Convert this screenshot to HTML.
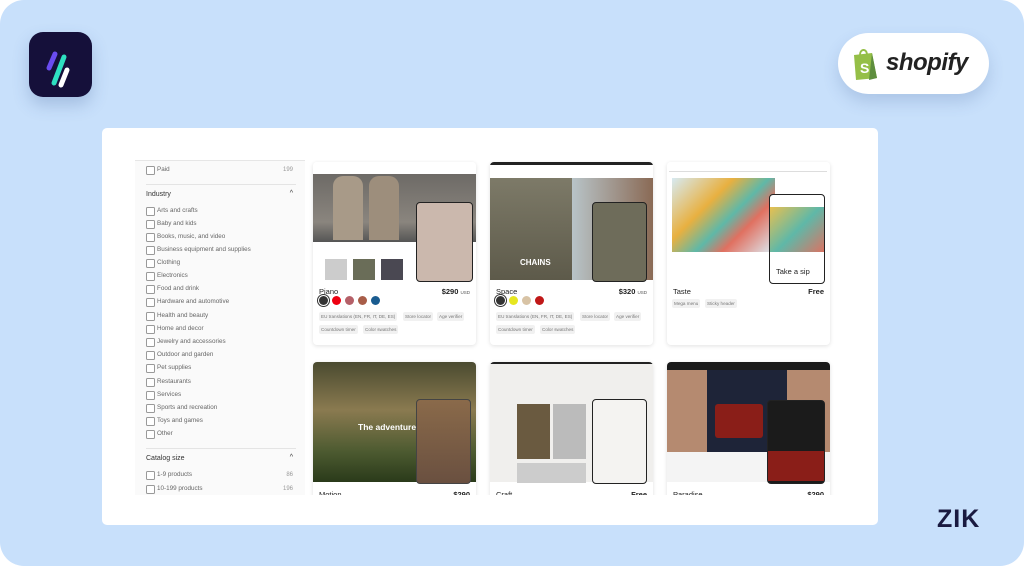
<!DOCTYPE html>
<html><head><meta charset="utf-8"><style>
*{margin:0;padding:0;box-sizing:border-box}
body{width:1024px;height:566px;background:#fff;font-family:"Liberation Sans",sans-serif;overflow:hidden;position:relative}
.bg{position:absolute;left:0;top:0;width:1024px;height:566px;background:#c8e0fb;border-radius:24px}
.logo{position:absolute;left:29px;top:32px;width:63px;height:65px;background:#15103a;border-radius:14px;box-shadow:0 8px 16px rgba(60,90,150,.25)}
.shop{position:absolute;left:838px;top:33px;width:151px;height:61px;background:#fff;border-radius:31px;box-shadow:0 8px 16px rgba(60,90,150,.2)}
.shop span{position:absolute;left:48px;top:16px;font-size:24px;font-weight:bold;font-style:italic;color:#222;letter-spacing:-.5px}
.panel{position:absolute;left:102px;top:128px;width:776px;height:397px;background:#fff;border-radius:5px}
.zik{position:absolute;left:937px;top:505px;font-size:25px;font-weight:bold;color:#1a1a40;letter-spacing:1px}
.clip{position:absolute;left:135px;top:160px;width:712px;height:335px;overflow:hidden;background:#fff}
.side{position:absolute;left:0;top:0;width:170px;height:335px;background:#fafafa;border-top:1px solid #e6e6e6}
.row{position:absolute;left:11px;font-size:6.3px;color:#666;height:9px;line-height:8px}
.row:before{content:"";position:absolute;left:0;top:0;width:7px;height:7px;border:1px solid #999;border-radius:1.5px;background:#fff}
.row span{margin-left:11px}
.cnt{position:absolute;right:12px;font-size:6px;color:#999}
.hd{position:absolute;left:11px;font-size:7px;color:#333}
.car{position:absolute;right:12px;font-size:7px;color:#333}
.sep{position:absolute;left:11px;width:150px;height:1px;background:#e4e4e4}
.card{position:absolute;width:163px;height:183px;background:#fff;border-radius:4px;box-shadow:0 1px 4px rgba(0,0,0,.12);overflow:hidden}
.img{position:absolute;left:0;top:0;width:163px;height:118px}
.nm{position:absolute;left:6px;top:125px;font-size:7.5px;color:#222}
.pr{position:absolute;right:6px;top:125px;font-size:7.5px;color:#222;font-weight:bold}
.pr small{font-size:4.5px;font-weight:normal;color:#555}
.sw{position:absolute;top:134px;width:9px;height:9px;border-radius:50%}
.tag{position:absolute;font-size:4.6px;color:#777;background:#f1f1f1;padding:2px 2px;border-radius:2px;white-space:nowrap}
.ph{position:absolute;background:#fff;border:1.5px solid #222;border-radius:4px;overflow:hidden}
</style></head><body>
<div class="bg"></div>
<div class="logo"><svg width="63" height="65" viewBox="0 0 63 65"><line x1="20" y1="36" x2="26" y2="22" stroke="#6a4cf0" stroke-width="5" stroke-linecap="round"/><line x1="25" y1="51" x2="35" y2="25" stroke="#2ee0c0" stroke-width="5" stroke-linecap="round"/><line x1="32" y1="53" x2="38" y2="38" stroke="#fff" stroke-width="5" stroke-linecap="round"/></svg></div>
<div class="shop"><svg style="position:absolute;left:12px;top:14px" width="30" height="34" viewBox="0 0 30 34"><path d="M4 8 L22 6 L27 31 L6 33 Z" fill="#95bf47"/><path d="M22 6 L27 31 L19 33 Z" fill="#5e8e3e"/><path d="M10 8 C10 2 16 1 17 7" fill="none" stroke="#95bf47" stroke-width="2"/><text x="10" y="26" font-size="14" font-weight="bold" fill="#fff" font-family="Liberation Sans">S</text></svg><span>shopify</span></div>
<div class="panel"></div>
<div class="clip">
<div class="side">
<div class="row" style="top:5px"><span>Paid</span></div><div class="cnt" style="top:6px">199</div>
<div class="sep" style="top:23px"></div>
<div class="hd" style="top:30px">Industry</div><div class="car" style="top:29px">^</div>
<div class="row" style="top:46px"><span>Arts and crafts</span></div>
<div class="row" style="top:59px"><span>Baby and kids</span></div>
<div class="row" style="top:72px"><span>Books, music, and video</span></div>
<div class="row" style="top:85px"><span>Business equipment and supplies</span></div>
<div class="row" style="top:98px"><span>Clothing</span></div>
<div class="row" style="top:111px"><span>Electronics</span></div>
<div class="row" style="top:124px"><span>Food and drink</span></div>
<div class="row" style="top:137px"><span>Hardware and automotive</span></div>
<div class="row" style="top:151px"><span>Health and beauty</span></div>
<div class="row" style="top:164px"><span>Home and decor</span></div>
<div class="row" style="top:177px"><span>Jewelry and accessories</span></div>
<div class="row" style="top:190px"><span>Outdoor and garden</span></div>
<div class="row" style="top:203px"><span>Pet supplies</span></div>
<div class="row" style="top:217px"><span>Restaurants</span></div>
<div class="row" style="top:230px"><span>Services</span></div>
<div class="row" style="top:243px"><span>Sports and recreation</span></div>
<div class="row" style="top:256px"><span>Toys and games</span></div>
<div class="row" style="top:269px"><span>Other</span></div>
<div class="sep" style="top:287px"></div>
<div class="hd" style="top:294px">Catalog size</div><div class="car" style="top:293px">^</div>
<div class="row" style="top:310px"><span>1-9 products</span></div><div class="cnt" style="top:311px">86</div>
<div class="row" style="top:324px"><span>10-199 products</span></div><div class="cnt" style="top:325px">196</div>
</div>

<div class="card" style="left:178px;top:2px">
<div class="img" style="background:linear-gradient(#fff 0,#fff 12px,#6d6a66 12px,#8a857e 60px,#555 80px,#fff 80px)"></div>
<div style="position:absolute;left:20px;top:14px;width:30px;height:64px;background:#a89a88;border-radius:10px 10px 0 0"></div>
<div style="position:absolute;left:56px;top:14px;width:30px;height:64px;background:#9d8e7c;border-radius:10px 10px 0 0"></div>
<div style="position:absolute;left:12px;top:97px;width:22px;height:21px;background:#ccc"></div>
<div style="position:absolute;left:40px;top:97px;width:22px;height:21px;background:#6a6d58"></div>
<div style="position:absolute;left:68px;top:97px;width:22px;height:21px;background:#4a4852"></div>
<div class="ph" style="left:103px;top:40px;width:57px;height:80px;background:#cbb8ad"></div>
<div class="nm">Piano</div><div class="pr">$290 <small>USD</small></div>
<div class="sw" style="left:6px;background:#333;box-shadow:0 0 0 1px #fff,0 0 0 2px #333"></div><div class="sw" style="left:19px;background:#e01"></div><div class="sw" style="left:32px;background:#b56068"></div><div class="sw" style="left:45px;background:#a85d48"></div><div class="sw" style="left:58px;background:#1a5c90"></div>
<div class="tag" style="left:6px;top:150px">EU translations (EN, FR, IT, DE, ES)</div><div class="tag" style="left:90px;top:150px">Store locator</div><div class="tag" style="left:124px;top:150px">Age verifier</div>
<div class="tag" style="left:6px;top:163px">Countdown timer</div><div class="tag" style="left:50px;top:163px">Color swatches</div>
</div>

<div class="card" style="left:355px;top:2px">
<div class="img" style="background:linear-gradient(#222 0,#222 3px,#fff 3px,#fff 16px,#7d7a68 16px,#5d5a4a 118px)"></div>
<div style="position:absolute;left:82px;top:16px;width:81px;height:102px;background:linear-gradient(90deg,#b8c4c8,#8a6a55)"></div>
<div class="ph" style="left:102px;top:40px;width:55px;height:80px;background:#6e6c5a"></div>
<div style="position:absolute;left:30px;top:96px;color:#fff;font-size:8px;font-weight:bold">CHAINS</div>
<div class="nm">Space</div><div class="pr">$320 <small>USD</small></div>
<div class="sw" style="left:6px;background:#333;box-shadow:0 0 0 1px #fff,0 0 0 2px #333"></div><div class="sw" style="left:19px;background:#e6e620"></div><div class="sw" style="left:32px;background:#d8c3a5"></div><div class="sw" style="left:45px;background:#c01818"></div>
<div class="tag" style="left:6px;top:150px">EU translations (EN, FR, IT, DE, ES)</div><div class="tag" style="left:90px;top:150px">Store locator</div><div class="tag" style="left:124px;top:150px">Age verifier</div>
<div class="tag" style="left:6px;top:163px">Countdown timer</div><div class="tag" style="left:50px;top:163px">Color swatches</div>
</div>

<div class="card" style="left:532px;top:2px">
<div class="img" style="background:#fff"></div>
<div style="position:absolute;left:2px;top:9px;width:158px;height:1px;background:#ddd"></div>
<div style="position:absolute;left:5px;top:16px;width:103px;height:74px;background:linear-gradient(135deg,#d7eaf2,#e8b040 35%,#5fb8a8 55%,#e07060 70%,#dcecf4)"></div>
<div class="ph" style="left:102px;top:32px;width:56px;height:90px"><div style="position:absolute;top:12px;left:0;width:56px;height:45px;background:linear-gradient(135deg,#e8c050,#5fb8a8,#e07060)"></div><div style="position:absolute;top:72px;left:6px;font-size:7.5px;color:#222">Take a sip</div></div>
<div class="nm">Taste</div><div class="pr">Free</div>
<div class="tag" style="left:5px;top:137px">Mega menu</div><div class="tag" style="left:38px;top:137px">Sticky header</div>
</div>

<div class="card" style="left:178px;top:202px">
<div class="img" style="height:120px;background:linear-gradient(#4a4a30,#8a7a50 40%,#4c5a30 75%,#2a3a1a)"></div>
<div style="position:absolute;left:45px;top:60px;color:#fff;font-size:8.5px;font-weight:bold">The adventure</div>
<div class="ph" style="left:103px;top:37px;width:55px;height:85px;background:linear-gradient(#8a6a4a,#6a5040);border-color:#444"></div>
<div class="nm" style="top:128px">Motion</div><div class="pr" style="top:128px">$290</div>
</div>
<div class="card" style="left:355px;top:202px">
<div class="img" style="height:120px;background:linear-gradient(#222 0,#222 2px,#f0efed 2px)"></div>
<div style="position:absolute;left:27px;top:42px;width:33px;height:55px;background:#6a5a40"></div>
<div style="position:absolute;left:63px;top:42px;width:33px;height:55px;background:#bbb"></div>
<div style="position:absolute;left:27px;top:101px;width:69px;height:20px;background:#ccc"></div>
<div class="ph" style="left:102px;top:37px;width:55px;height:85px;background:#f4f3f1"></div>
<div class="nm" style="top:128px">Craft</div><div class="pr" style="top:128px">Free</div>
</div>
<div class="card" style="left:532px;top:202px">
<div class="img" style="height:120px;background:linear-gradient(#1a1a1a 0,#1a1a1a 8px,#b58a70 8px,#b58a70 90px,#f4f4f4 90px)"></div>
<div style="position:absolute;left:40px;top:8px;width:80px;height:82px;background:#1e2438"></div>
<div style="position:absolute;left:48px;top:42px;width:48px;height:34px;background:#8a1e18;border-radius:3px"></div>
<div class="ph" style="left:100px;top:38px;width:58px;height:84px;background:#1b1b1b"><div style="position:absolute;left:0;top:50px;width:58px;height:30px;background:#8a1e18"></div></div>
<div class="nm" style="top:128px">Paradise</div><div class="pr" style="top:128px">$290</div>
</div>
</div>
<div class="zik">ZIK</div>
</body></html>
